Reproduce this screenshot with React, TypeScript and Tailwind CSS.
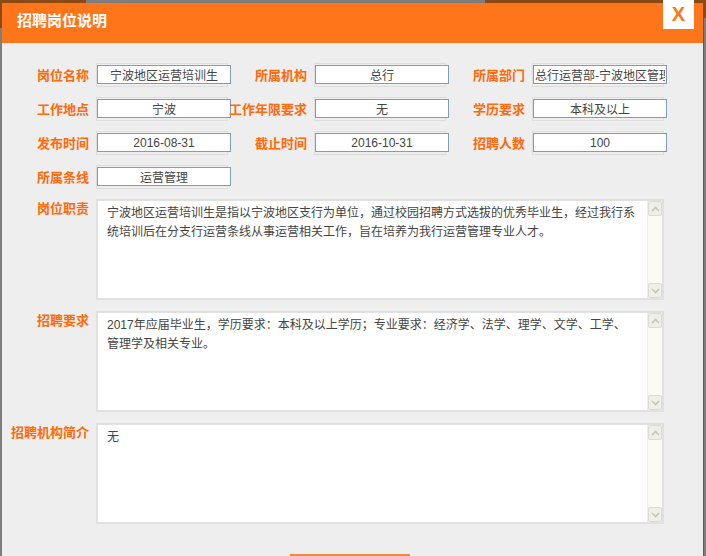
import React from 'react';

const FONT = { fontFamily: '"Liberation Sans", "Noto Sans CJK SC", sans-serif' };

const ROWS: { label: string; value: string; left?: boolean }[][] = [
  [
    { label: '岗位名称', value: '宁波地区运营培训生' },
    { label: '所属机构', value: '总行' },
    { label: '所属部门', value: '总行运营部-宁波地区管理部', left: true },
  ],
  [
    { label: '工作地点', value: '宁波' },
    { label: '工作年限要求', value: '无' },
    { label: '学历要求', value: '本科及以上' },
  ],
  [
    { label: '发布时间', value: '2016-08-31' },
    { label: '截止时间', value: '2016-10-31' },
    { label: '招聘人数', value: '100' },
  ],
  [{ label: '所属条线', value: '运营管理' }],
];

const AREAS = [
  {
    label: '岗位职责',
    text: '宁波地区运营培训生是指以宁波地区支行为单位，通过校园招聘方式选拔的优秀毕业生，经过我行系\n统培训后在分支行运营条线从事运营相关工作，旨在培养为我行运营管理专业人才。',
  },
  {
    label: '招聘要求',
    text: '2017年应届毕业生，学历要求：本科及以上学历；专业要求：经济学、法学、理学、文学、工学、\n管理学及相关专业。',
  },
  { label: '招聘机构简介', text: '无' },
];

function Chevron({ up }: { up?: boolean }) {
  return (
    <svg width="9" height="6" viewBox="0 0 9 6">
      <path d={up ? 'M1 5 L4.5 1.5 L8 5' : 'M1 1 L4.5 4.5 L8 1'} fill="none" stroke="#c6c6bc" strokeWidth="1.6" />
    </svg>
  );
}

function ScrollBar() {
  return (
    <div className="w-[15px] shrink-0 flex flex-col justify-between bg-[#fbfbf4] border-l border-[#efefe8]">
      <div className="h-[15px] flex items-center justify-center bg-[#efefe7] border border-[#dcdcd3] rounded-[2px]">
        <Chevron up />
      </div>
      <div className="h-[15px] flex items-center justify-center bg-[#efefe7] border border-[#dcdcd3] rounded-[2px]">
        <Chevron />
      </div>
    </div>
  );
}

function Label({ text }: { text: string }) {
  return (
    <div className="w-[76px] shrink-0 flex justify-end">
      <span className="shrink-0 whitespace-nowrap text-[13px] font-bold text-[#ff6a0a] leading-[19px]">{text}</span>
    </div>
  );
}

export default function App() {
  return (
    <div className="relative w-[706px] h-[556px] overflow-hidden bg-[#7d7d7d] pl-[2px] pt-[3px]" style={FONT}>
      {/* page behind the dialog */}
      <div className="absolute left-0 top-0 w-[86px] h-[28px] bg-[#8b4a15]" />
      <div className="absolute left-[485px] top-0 w-[221px] h-[18px] bg-[#8b4a15]" />
      <div className="absolute left-[703px] top-[18px] w-[1px] h-[538px] bg-[#5a5a5a]" />

      <div className="relative w-[701px] h-[600px] bg-[#eeeeee]">
        {/* header */}
        <div className="h-[40px] bg-[#ff761a] pl-[15px] flex items-center">
          <span className="text-white text-[15px] font-bold -mt-[3px]">招聘岗位说明</span>
        </div>
        <button className="absolute -top-[3px] right-[9px] w-[31px] h-[29px] bg-white flex items-center justify-center text-[#ff761a] text-[20px] font-bold leading-none pb-[2px]">
          X
        </button>

        {/* body */}
        <div className="pl-[11px] pt-[20px] flex flex-col gap-[10px]">
          {ROWS.map((row, i) => (
            <div key={i} className="flex">
              {row.map((f) => (
                <div key={f.label} className="w-[218px] flex items-center">
                  <Label text={f.label} />
                  <div className="ml-[7px] w-[132px] h-[24px] border border-[#dedede] pt-[1px]">
                    <input
                      readOnly
                      value={f.value}
                      className={`block w-[134px] h-[19px] bg-white border border-[#7f9db9] text-[12px] text-[#444] outline-none px-[1px] ${f.left ? 'text-left' : 'text-center'}`}
                    />
                  </div>
                </div>
              ))}
            </div>
          ))}

          <div className="flex flex-col gap-[11px]">
            {AREAS.map((a) => (
              <div key={a.label} className="flex items-start">
                <Label text={a.label} />
                <div className="ml-[7px] w-[568px] h-[101px] bg-white border-2 border-[#e1e1e1] flex">
                  <div className="flex-1 pl-[9px] pt-[3px] text-[12px] leading-[19px] text-[#444] whitespace-pre-line">
                    {a.text}
                  </div>
                  <ScrollBar />
                </div>
              </div>
            ))}
          </div>

          {/* bottom button, only its top edge is in view */}
          <div className="pt-[20px] pl-[277px]">
            <button aria-label="关闭" className="block w-[120px] h-[28px] bg-[#f08a3c]" />
          </div>
        </div>
      </div>
    </div>
  );
}
